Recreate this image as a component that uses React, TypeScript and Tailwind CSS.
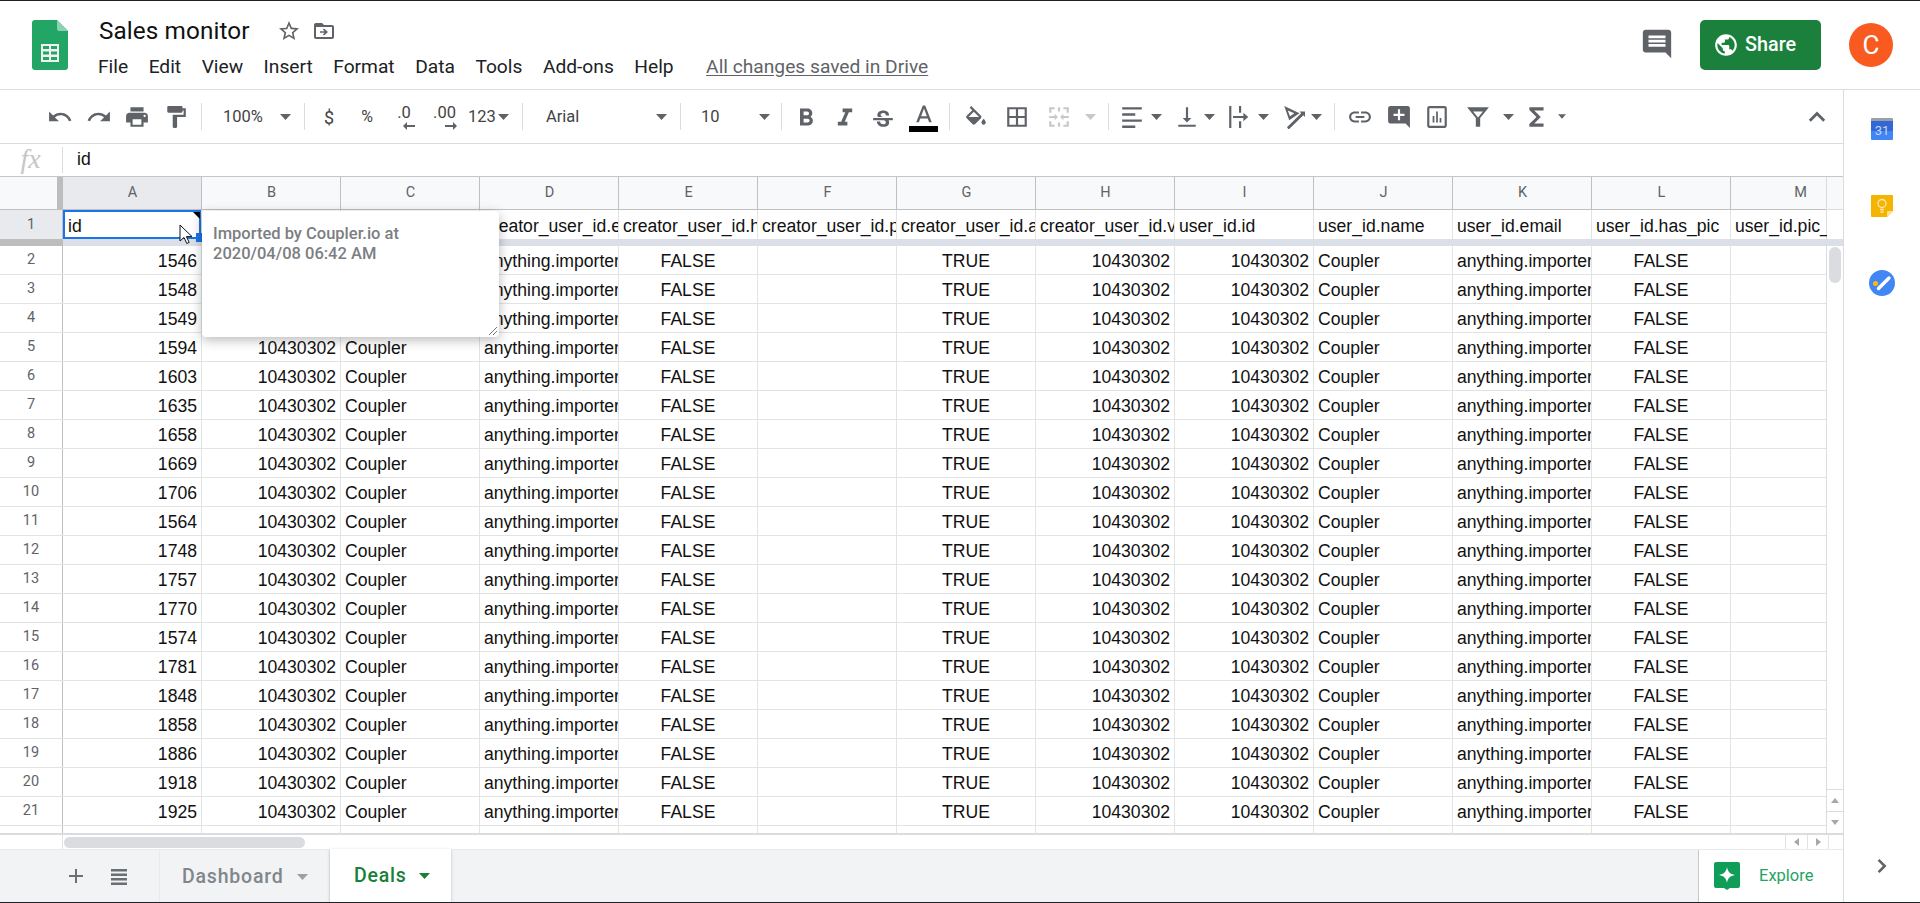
import type { ReactNode } from "react"

const ids = [1546, 1548, 1549, 1594, 1603, 1635, 1658, 1669, 1706, 1564, 1748, 1757, 1770, 1574, 1781, 1848, 1858, 1886, 1918, 1925]
const letters = ["A", "B", "C", "D", "E", "F", "G", "H", "I", "J", "K", "L", "M"]
const titles = [
  "id",
  "creator_user_id.id",
  "creator_user_id.name",
  "creator_user_id.e",
  "creator_user_id.h",
  "creator_user_id.p",
  "creator_user_id.a",
  "creator_user_id.v",
  "user_id.id",
  "user_id.name",
  "user_id.email",
  "user_id.has_pic",
  "user_id.pic_",
]
const menu = ["File", "Edit", "View", "Insert", "Format", "Data", "Tools", "Add-ons", "Help"]

const P = {
  undo: "M12.5 8c-2.65 0-5.05.99-6.9 2.6L2 7v9h9l-3.62-3.62c1.39-1.16 3.16-1.88 5.12-1.88 3.54 0 6.55 2.31 7.6 5.5l2.37-.78C21.08 11.03 17.15 8 12.5 8z",
  redo: "M18.4 10.6C16.55 8.99 14.15 8 11.5 8c-4.65 0-8.58 3.03-9.96 7.22L3.9 16c1.05-3.19 4.05-5.5 7.6-5.5 1.95 0 3.73.72 5.12 1.88L13 16h9V7l-3.6 3.6z",
  print: "M19 8H5c-1.66 0-3 1.34-3 3v6h4v4h12v-4h4v-6c0-1.66-1.34-3-3-3zm-3 11H8v-5h8v5zm3-7c-.55 0-1-.45-1-1s.45-1 1-1 1 .45 1 1-.45 1-1 1zm-1-9H6v4h12V3z",
  paint: "M18 4V3c0-.55-.45-1-1-1H5c-.55 0-1 .45-1 1v4c0 .55.45 1 1 1h12c.55 0 1-.45 1-1V6h1v4H9v11c0 .55.45 1 1 1h2c.55 0 1-.45 1-1v-9h8V4h-3z",
  bold: "M15.6 10.79c.97-.67 1.65-1.77 1.65-2.79 0-2.26-1.75-4-4-4H7v14h7.04c2.09 0 3.71-1.7 3.71-3.79 0-1.52-.86-2.82-2.15-3.42zM10 6.5h3c.83 0 1.5.67 1.5 1.5s-.67 1.5-1.5 1.5h-3v-3zm3.5 9H10v-3h3.5c.83 0 1.5.67 1.5 1.5s-.67 1.5-1.5 1.5z",
  italic: "M10 4v3h2.21l-3.42 8H6v3h8v-3h-2.21l3.42-8H18V4z",
  strike: "M6.85 7.08C6.85 4.37 9.45 3 12.24 3c1.64 0 3 .49 3.9 1.28.77.65 1.46 1.73 1.46 3.24h-3.01c0-.31-.05-.59-.15-.85-.29-.86-1.2-1.28-2.25-1.28-1.86 0-2.34 1.02-2.34 1.7 0 .48.25.88.74 1.21.38.25.77.48 1.41.7H7.39c-.21-.34-.54-.89-.54-1.92zM21 12v-2H3v2h9.62c1.15.45 1.96.75 1.96 1.97 0 1-.81 1.67-2.28 1.67-1.54 0-2.93-.54-2.93-2.51H6.4c0 .55.08 1.13.24 1.58.81 2.29 3.29 3.3 5.67 3.3 2.27 0 5.3-.89 5.3-4.05 0-.3-.01-1.16-.48-1.96H21z",
  textA: "M11 3L5.5 17h2.25l1.12-3h6.25l1.12 3h2.25L13 3h-2zm-1.38 9L12 5.67 14.38 12H9.62z",
  fill: "M16.56 8.94L7.62 0 6.21 1.41l2.38 2.38-5.15 5.15c-.59.59-.59 1.54 0 2.12l5.5 5.5c.29.29.68.44 1.06.44s.77-.15 1.06-.44l5.5-5.5c.59-.58.59-1.53 0-2.12zM5.21 10L10 5.21 14.79 10H5.21zM19 11.5s-2 2.17-2 3.5c0 1.1.9 2 2 2s2-.9 2-2c0-1.33-2-3.5-2-3.5z",
  borders: "M3 3v18h18V3H3zm8 16H5v-6h6v6zm0-8H5V5h6v6zm8 8h-6v-6h6v6zm0-8h-6V5h6v6z",
  merge: "M3 3h5v2H5v3H3V3zm13 0h5v5h-2V5h-3V3zM3 16h2v3h3v2H3v-5zm16 0h2v5h-5v-2h3v-3zM11 3h2v4h-2V3zm0 14h2v4h-2v-4zM3 11h5V9l3 3-3 3v-2H3v-2zm18 0h-5V9l-3 3 3 3v-2h5v-2z",
  align: "M3 3h18v2.2H3V3zm0 5.6h12v2.2H3V8.6zm0 5.6h18v2.2H3v-2.2zm0 5.6h12V22H3v-2.2z",
  valign: "M16 13h-3V3h-2v10H8l4 4 4-4zM4 19v2h16v-2H4z",
  wrap: "M3 2h2v20H3V2zm9 0h2v6h-2V2zm0 14h2v6h-2v-6zM6.5 11H16V8l4.5 4-4.5 4v-3H6.5v-2z",
  rotate: "M4 2l14 6.5-9.5 6.5L4 2zm3.2 4l2 5.2 4-2.7-6-2.5zM6.5 21.5l13-13-1.5-1.5H23v5l-1.5-1.5-13.5 13-1.5-2z",
  link: "M3.9 12c0-1.71 1.39-3.1 3.1-3.1h4V7H7c-2.76 0-5 2.24-5 5s2.24 5 5 5h4v-1.9H7c-1.71 0-3.1-1.39-3.1-3.1zM8 13h8v-2H8v2zm9-6h-4v1.9h4c1.71 0 3.1 1.39 3.1 3.1s-1.39 3.1-3.1 3.1h-4V17h4c2.76 0 5-2.24 5-5s-2.24-5-5-5z",
  commentAdd: "M22 4c0-1.1-.9-2-2-2H4c-1.1 0-2 .9-2 2v12c0 1.1.9 2 2 2h14l4 4V4zm-5 7h-4v4h-2v-4H7V9h4V5h2v4h4v2z",
  chart: "M19 2H5c-1.1 0-2 .9-2 2v16c0 1.1.9 2 2 2h14c1.1 0 2-.9 2-2V4c0-1.1-.9-2-2-2zm0 18H5V4h14v16zM8 11h1.6v6H8zm3.2-4h1.6v10h-1.6zm3.2 6H16v4h-1.6z",
  filter: "M2 3h20l-8 10v8h-4v-8L2 3zm5.5 4l4.5 5.5L16.5 7h-9z",
  sigma: "M18 3H5v2.5l6.5 6.5L5 18.5V21h13v-3H9.5l6-6-6-6H18z",
  up: "M12 7l-7.5 7.5 1.8 1.8L12 10.6l5.7 5.7 1.8-1.8z",
  star: "M22 9.24l-7.19-.62L12 2 9.19 8.63 2 9.24l5.46 4.73L5.82 21 12 17.27 18.18 21l-1.63-7.03L22 9.24zM12 15.4l-3.76 2.27 1-4.28-3.32-2.88 4.38-.38L12 6.1l1.71 4.04 4.38.38-3.32 2.88 1 4.28L12 15.4z",
  folder: "M20 6h-8l-2-2H4c-1.1 0-2 .9-2 2v12c0 1.1.9 2 2 2h16c1.1 0 2-.9 2-2V8c0-1.1-.9-2-2-2zm0 12H4V8h16v10zM12 9.5l-1.1 1.1 1.7 1.6H8v1.6h4.6l-1.7 1.6 1.1 1.1 4-3.5z",
  comments: "M21.99 4c0-1.1-.89-2-1.99-2H4c-1.1 0-2 .9-2 2v12c0 1.1.9 2 2 2h14l4 4-.01-18zM18 14H6v-2h12v2zm0-3H6V9h12v2zm0-3H6V6h12v2z",
  globe: "M12 2C6.48 2 2 6.48 2 12s4.48 10 10 10 10-4.48 10-10S17.52 2 12 2zm-1 17.93c-3.95-.49-7-3.85-7-7.93 0-.62.08-1.21.21-1.79L9 15v1c0 1.1.9 2 2 2v1.93zm6.9-2.54c-.26-.81-1-1.39-1.9-1.39h-1v-3c0-.55-.45-1-1-1H8v-2h2c.55 0 1-.45 1-1V7h2c1.1 0 2-.9 2-2v-.41c2.93 1.19 5 4.06 5 7.41 0 2.08-.8 3.97-2.1 5.39z",
  plus: "M19 13h-6v6h-2v-6H5v-2h6V5h2v6h6v2z",
  list: "M4 5h16v2.5H4V5zm0 4.5h16V12H4V9.5zM4 14h16v2.5H4V14zm0 4.5h16V21H4v-2.5z",
  right: "M9.5 5L7.7 6.8 12.9 12l-5.200 5.200L9.5 19l7-7z",
}

type IconProps = { d: string; className?: string; color?: string; size?: string; vb?: string }

function Icon({ d, className = "", color = "text-[#5f6368]", size = "w-6 h-6", vb = "0 0 24 24" }: IconProps) {
  return (
    <svg viewBox={vb} className={`${size} shrink-0 fill-current ${color} ${className}`}>
      <path d={d} />
    </svg>
  )
}

// toolbar glyphs are drawn about 10% bigger than the material 24 box
function Tool(props: IconProps) {
  return <Icon vb="1 1 22 22" {...props} />
}

function Caret({ className = "", color = "text-[#5f6368]", small }: { className?: string; color?: string; small?: boolean }) {
  return (
    <svg viewBox="0 0 11 6" className={`${small ? "w-2 h-[5px]" : "w-[11px] h-[6px]"} shrink-0 fill-current ${color} ${className}`}>
      <path d="M0 0h11L5.5 6z" />
    </svg>
  )
}

function Sep({ className = "" }: { className?: string }) {
  return <div className={`w-px h-[27px] shrink-0 bg-[#dadce0] ${className}`} />
}

function Header() {
  return (
    <header className="h-[89px] shrink-0 flex border-b border-[#dadce0] bg-white">
      {/* sheets logo */}
      <svg viewBox="0 0 36 50" className="w-9 h-[50px] ml-8 mt-[19px] shrink-0">
        <path d="M3 0h22l11 11v36a3 3 0 0 1-3 3H3a3 3 0 0 1-3-3V3a3 3 0 0 1 3-3z" fill="#23a566" />
        <path d="M25 0l11 11H27a2 2 0 0 1-2-2z" fill="#8ed1b1" />
        <path d="M9 24h18v18H9z" fill="#f1f1f1" />
        <path d="M11 26h6v3h-6zM19 26h6v3h-6zM11 31.5h6v3h-6zM19 31.5h6v3h-6zM11 37h6v3h-6zM19 37h6v3h-6z" fill="#23a566" />
      </svg>
      <div className="ml-[31px] flex flex-col">
        <div className="flex items-center h-[30px] mt-[15px]">
          <span className="text-[24.3px] leading-[30px] text-[#111] tracking-[0.1px]">Sales monitor</span>
          <Icon d={P.star} className="ml-[27px]" />
          <Icon d={P.folder} className="ml-[11px]" />
        </div>
        <div className="flex items-center h-6 mt-[9px] -ml-px text-[19.2px] text-[#202124] gap-[20.5px]">
          {menu.map((m) => (
            <span key={m}>{m}</span>
          ))}
          <span className="ml-[12px] text-[#5f6368] underline underline-offset-2">All changes saved in Drive</span>
        </div>
      </div>
      <div className="ml-auto mr-[27px] flex items-center">
        <Icon d={P.comments} size="w-[34px] h-[34px]" className="mb-[2px]" />
        <button className="ml-[26px] w-[121px] h-[50px] rounded-[5px] bg-[#1a803c] flex items-center text-white text-[19.8px] font-medium pl-[13px] gap-[6px]">
          <Icon d={P.globe} color="text-white" size="w-[26px] h-[26px]" />
          Share
        </button>
        <div className="ml-[28px] w-11 h-11 rounded-full bg-[#f85a1f] text-white text-[26px] flex items-center justify-center">C</div>
      </div>
    </header>
  )
}

function Toolbar() {
  return (
    <div className="h-[54px] shrink-0 flex items-center border-b border-[#dadce0] pl-[48px] pr-[14px] text-[16.5px] text-[#444]">
      <Tool d={P.undo} />
      <Tool d={P.redo} className="ml-[15px]" />
      <Tool d={P.print} className="ml-[14px]" />
      <Tool d={P.paint} className="ml-[15px]" />
      <Sep className="ml-[13px]" />
      <span className="ml-[21px] w-[40px] pt-[1px]">100%</span>
      <Caret className="ml-[17px]" />
      <Sep className="ml-[13px]" />
      <span className="ml-[14px] w-[20px] text-center text-[18px] pt-[1px]">$</span>
      <span className="ml-[18px] w-[20px] text-center text-[16px] pt-[1px]">%</span>
      <div className="ml-[16px] w-[22px] flex flex-col items-center">
        <span className="leading-[18px]">.0</span>
        <svg viewBox="0 0 12 8" className="w-3 h-2 self-end fill-current text-[#5f6368]"><path d="M4 0v3h8v2H4v3L0 4z" /></svg>
      </div>
      <div className="ml-[17px] w-[25px] flex flex-col items-center">
        <span className="leading-[18px]">.00</span>
        <svg viewBox="0 0 12 8" className="w-3 h-2 self-end fill-current text-[#5f6368]"><path d="M8 0v3H0v2h8v3l4-4z" /></svg>
      </div>
      <span className="ml-[11px] w-[27px] pt-[1px]">123</span>
      <Caret className="ml-[3px]" />
      <Sep className="ml-[13px]" />
      <span className="ml-[23px] w-[110px] pt-[1px]">Arial</span>
      <Caret />
      <Sep className="ml-[13px]" />
      <span className="ml-[20px] w-[58px] pt-[1px]">10</span>
      <Caret />
      <Sep className="ml-[11px]" />
      <Icon d={P.bold} vb="2 1 20 20" className="ml-[12px]" />
      <Icon d={P.italic} vb="2 1 20 20" className="ml-[15px]" />
      <Icon d={P.strike} vb="1 -2 22 22" className="ml-[14px]" />
      <div className="ml-[14px] w-[29px] flex flex-col items-center mt-[2px]">
        <Icon d={P.textA} vb="2 1 20 20" className="-mb-[3px]" />
        <div className="w-[29px] h-[6px] bg-black mt-[2px]" />
      </div>
      <Sep className="ml-[11px]" />
      <Icon d={P.fill} vb="1 -1 22 22" className="ml-[14px]" />
      <Tool d={P.borders} className="ml-[17px]" />
      <Tool d={P.merge} className="ml-[18px]" color="text-[#c6c8ca]" />
      <Caret className="ml-[14px]" color="text-[#c6c8ca]" />
      <Sep className="ml-[12px]" />
      <Tool d={P.align} className="ml-[11px]" />
      <Caret className="ml-[7px]" />
      <Tool d={P.valign} className="ml-[13px]" />
      <Caret className="ml-[5px]" />
      <Tool d={P.wrap} className="ml-[12px]" />
      <Caret className="ml-[7px]" />
      <Tool d={P.rotate} className="ml-[12px]" />
      <Caret className="ml-[6px]" />
      <Sep className="ml-[12px]" />
      <Tool d={P.link} className="ml-[13px]" />
      <Tool d={P.commentAdd} className="ml-[15px]" />
      <Tool d={P.chart} className="ml-[14px]" />
      <Tool d={P.filter} className="ml-[17px]" />
      <Caret className="ml-[13px]" />
      <Tool d={P.sigma} className="ml-[11px]" />
      <Caret small className="ml-[9px]" />
      <Tool d={P.up} className="ml-auto" />
    </div>
  )
}

function FormulaBar() {
  return (
    <div className="h-[33px] shrink-0 flex items-center border-b border-[#c4c7c5]">
      <span className="w-[61px] mr-px text-center font-['Liberation_Serif',serif] italic text-[28px] leading-[30px] pb-[3px] text-[#c4c7c5]">fx</span>
      <div className="w-px h-[26px] bg-[#dadce0]" />
      <span className="ml-[14px] pb-[2px] font-['Liberation_Sans',sans-serif] text-[17.6px] text-[#111]">id</span>
    </div>
  )
}

function Cell({ last, className = "", children }: { last?: boolean; className?: string; children?: ReactNode }) {
  return (
    <div className={`${last ? "w-[96px]" : "w-[139px] border-r"} shrink-0 h-full border-[#e2e3e3] overflow-hidden whitespace-nowrap flex items-center ${className}`}>
      {children}
    </div>
  )
}

function DataRow({ n, id }: { n: number; id: number }) {
  const left = "pt-[2px] pl-[4px] justify-start"
  const right = "pt-[2px] pr-[4px] justify-end"
  const mid = "pt-[2px] justify-center"
  return (
    <div className="h-[29px] shrink-0 flex border-b border-[#e2e3e3]">
      <div className="w-[63px] shrink-0 border-r border-[#c0c0c0] flex items-center justify-center font-[Roboto,sans-serif] text-[14.5px] text-[#5f6368]">{n}</div>
      <Cell className={right}>{id}</Cell>
      <Cell className={right}>10430302</Cell>
      <Cell className={left}>Coupler</Cell>
      <Cell className={left}>anything.importer</Cell>
      <Cell className={mid}>FALSE</Cell>
      <Cell />
      <Cell className={mid}>TRUE</Cell>
      <Cell className={right}>10430302</Cell>
      <Cell className={right}>10430302</Cell>
      <Cell className={left}>Coupler</Cell>
      <Cell className={left}>anything.importer</Cell>
      <Cell className={mid}>FALSE</Cell>
      <Cell last />
    </div>
  )
}

function Sheet() {
  return (
    <div className="relative h-[658px] shrink-0 flex overflow-hidden border-b-2 border-[#dadce0]">
      <div className="w-[1827px] shrink-0 flex flex-col border-r border-[#dadce0] font-['Liberation_Sans',sans-serif] text-[17.6px] text-[#111]">
        {/* column letters */}
        <div className="h-[33px] shrink-0 flex bg-[#f8f9fa] border-b border-[#c0c0c0] font-[Roboto,sans-serif] text-[14.5px] text-[#5f6368]">
          <div className="w-[63px] shrink-0 flex justify-end bg-[#f8f9fa]">
            <div className="w-[6px] bg-[#bdbdbd]" />
          </div>
          {letters.map((l, i) => (
            <div
              key={l}
              className={`${i === 12 ? "w-[96px]" : "w-[139px] border-r border-[#c0c0c0]"} shrink-0 flex items-center overflow-hidden ${i === 0 ? "bg-[#e8eaed]" : ""}`}
            >
              {/* M is centred on its full width, part of it sits behind the scrollbar */}
              <span className="w-[139px] shrink-0 text-center">{l}</span>
            </div>
          ))}
        </div>
        {/* frozen first row */}
        <div className="h-[29px] shrink-0 flex">
          <div className="w-[63px] shrink-0 bg-[#e8eaed] border-r border-[#c0c0c0] flex items-center justify-center font-[Roboto,sans-serif] text-[14.5px] text-[#5f6368]">1</div>
          {titles.map((t, i) => (
            <Cell key={t} last={i === 12} className={`pt-[3px] relative ${i === 0 ? "pl-[5px]" : "pl-[4px]"}`}>
              {t}
              {i === 0 && (
                <>
                  <div className="absolute inset-0 border-[2.5px] border-[#1a73e8]" />
                  <svg viewBox="0 0 7 7" className="absolute top-[2px] right-[1px] w-[7px] h-[7px]">
                    <path d="M0 0h7v7z" fill="#000" />
                  </svg>
                </>
              )}
            </Cell>
          ))}
        </div>
        <div className="h-[7px] shrink-0 flex bg-[#dadfe8]">
          <div className="w-[63px] bg-[#bdbdbd]" />
        </div>
        {ids.map((id, i) => (
          <DataRow key={id} n={i + 2} id={id} />
        ))}
        <div className="flex-1 flex">
          <div className="w-[63px] shrink-0 border-r border-[#c0c0c0]" />
          {letters.map((l) => (
            <div key={l} className="w-[139px] shrink-0 border-r border-[#e2e3e3]" />
          ))}
        </div>
      </div>
      {/* vertical scrollbar */}
      <div className="flex-1 flex flex-col">
        <div className="h-[33px] bg-[#f8f9fa] border-b border-[#dadce0]" />
        <div className="h-[29px]" />
        <div className="h-[7px] bg-[#dadfe8]" />
        <div className="mt-[1px] ml-[2px] w-[12px] h-[36px] rounded-[6px] bg-[#dadce0]" />
        <div className="flex-1" />
        <div className="h-[22px] flex items-center justify-center border-t border-[#dadce0]">
          <svg viewBox="0 0 8 5" className="w-2 h-[5px] fill-[#a8a8a8]"><path d="M4 0l4 5H0z" /></svg>
        </div>
        <div className="h-[22px] flex items-center justify-center border-t border-[#dadce0]">
          <svg viewBox="0 0 8 5" className="w-2 h-[5px] fill-[#a8a8a8]"><path d="M0 0h8L4 5z" /></svg>
        </div>
      </div>

      {/* selection handle over A1 */}
      <div className="absolute left-[196px] top-[56px] w-[7px] h-[9px] bg-[#1a73e8] z-10" />

      {/* note popup */}
      <div className="absolute left-[202px] top-[34px] w-[297px] h-[126px] bg-white rounded-[4px] shadow-[0_3px_12px_rgba(0,0,0,0.28)] px-[11px] pt-[13px] z-20 font-[Roboto,sans-serif] font-medium text-[16.5px] leading-[20px] text-[#7b7e82]">
        Imported by Coupler.io at
        <br />
        2020/04/08 06:42 AM
        <svg viewBox="0 0 10 10" className="absolute right-[1px] bottom-[1px] w-[10px] h-[10px] stroke-[#777]">
          <path d="M1 9l8-8M5 9l4-4" fill="none" strokeWidth="1" />
        </svg>
      </div>

      {/* mouse cursor */}
      <svg viewBox="0 0 14 22" className="absolute left-[179px] top-[47px] w-[14px] h-[22px] z-30">
        <path d="M1 1v16l4-3.5 2.8 6 2.4-1.1-2.8-5.8H13z" fill="#fff" stroke="#111" strokeWidth="1" />
      </svg>
    </div>
  )
}

function HScroll() {
  return (
    <div className="h-[15px] shrink-0 flex border-b border-[#e8eaed]">
      <div className="w-[63px] shrink-0 border-r border-[#e2e3e3]" />
      <div className="w-[241px] h-[11px] mt-[2px] ml-[1px] rounded-[6px] bg-[#dadce0]" />
      <div className="ml-auto w-[22px] flex items-center justify-center border-l border-[#e2e3e3]">
        <svg viewBox="0 0 5 8" className="w-[5px] h-2 fill-[#a8a8a8]"><path d="M5 0v8L0 4z" /></svg>
      </div>
      <div className="w-[21px] flex items-center justify-center border-l border-[#e2e3e3]">
        <svg viewBox="0 0 5 8" className="w-[5px] h-2 fill-[#a8a8a8]"><path d="M0 0v8l5-4z" /></svg>
      </div>
      <div className="w-[15px] border-l border-[#e2e3e3]" />
    </div>
  )
}

function Tabs() {
  return (
    <div className="flex-1 flex bg-[#f1f3f4]">
      <Icon d={P.plus} className="ml-[64px] mt-[14px]" color="text-[#6b6e72]" />
      <Icon d={P.list} className="ml-[19px] mt-[14px]" color="text-[#6b6e72]" />
      <div className="ml-[28px] w-[171px] flex items-center border-l border-r border-[#e8eaed] pl-[22px] pt-[1px] text-[19.5px] tracking-[0.8px] font-medium text-[#80868b]">
        Dashboard
        <Caret className="ml-[13px]" color="text-[#9aa0a6]" />
      </div>
      <div className="w-[121px] -mt-[1px] flex items-center bg-white shadow-[0_1px_3px_rgba(60,64,67,0.25)] pl-[24px] pt-[1px] text-[19.5px] tracking-[0.8px] font-medium text-[#188038]">
        Deals
        <Caret className="ml-[12px]" color="text-[#188038]" />
      </div>
      <div className="ml-auto w-[145px] flex items-center bg-white border-l border-[#c8c8c8] pl-[15px]">
        <svg viewBox="0 0 26 28" className="w-[26px] h-[28px] shrink-0">
          <path d="M2 0h22a2 2 0 0 1 2 2v22a2 2 0 0 1-2 2h-8l-3 2-3-2H2a2 2 0 0 1-2-2V2a2 2 0 0 1 2-2z" fill="#0f9d58" />
          <path d="M13 5c.8 4.8 3.2 7.2 8 8-4.8.8-7.2 3.2-8 8-.8-4.8-3.2-7.2-8-8 4.8-.8 7.200-3.200 8-8z" fill="#fff" />
        </svg>
        <span className="ml-[19px] text-[16.5px] text-[#1fa463]">Explore</span>
      </div>
    </div>
  )
}

function SidePanel() {
  return (
    <aside className="flex-1 flex flex-col items-center">
      {/* calendar */}
      <svg viewBox="0 0 22 22" className="w-[22px] h-[22px] mt-[28px]">
        <path d="M1 0h20a1 1 0 0 1 1 1v3H0V1a1 1 0 0 1 1-1z" fill="#9aa0a6" />
        <path d="M0 3h22v10H0z" fill="#3367d6" />
        <path d="M0 13h22v8a1 1 0 0 1-1 1H1a1 1 0 0 1-1-1z" fill="#4285f4" />
        <text x="11" y="17" textAnchor="middle" fontSize="13" fontFamily="Roboto, sans-serif" fill="#c6d6f7">31</text>
      </svg>
      {/* keep */}
      <svg viewBox="0 0 22 22" className="w-[22px] h-[22px] mt-[55px]">
        <path d="M1 0h20a1 1 0 0 1 1 1v15l-6 6H1a1 1 0 0 1-1-1V1a1 1 0 0 1 1-1z" fill="#f4b400" />
        <path d="M22 16h-5a1 1 0 0 0-1 1v5z" fill="#fde293" />
        <circle cx="11" cy="8.5" r="4" fill="none" stroke="#fde9b3" strokeWidth="1.3" />
        <path d="M9 14.5h4M9.5 17h3" stroke="#fde9b3" strokeWidth="1.5" />
      </svg>
      {/* tasks */}
      <svg viewBox="0 0 26 26" className="w-[26px] h-[26px] mt-[53px]">
        <circle cx="13" cy="13" r="13" fill="#4285f4" />
        <circle cx="6.5" cy="13.5" r="2.5" fill="#fbbc04" />
        <path d="M9.5 18.5L20 8" stroke="#fff" strokeWidth="3.5" strokeLinecap="round" />
      </svg>
      <Icon d={P.right} className="mt-auto mb-[24px]" />
    </aside>
  )
}

export default function App() {
  return (
    <div className="w-[1920px] h-[903px] flex flex-col overflow-hidden bg-white border-t border-b border-[#202124] font-[Roboto,sans-serif]">
      <Header />
      <div className="flex-1 min-h-0 flex">
        <main className="w-[1844px] shrink-0 flex flex-col border-r border-[#dadce0]">
          <Toolbar />
          <FormulaBar />
          <Sheet />
          <HScroll />
          <Tabs />
        </main>
        <SidePanel />
      </div>
    </div>
  )
}
